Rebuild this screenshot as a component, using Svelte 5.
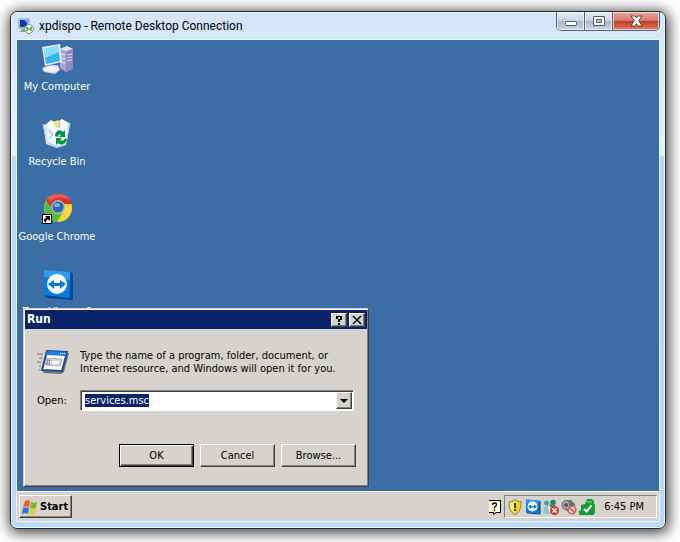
<script lang="ts">
	let command = $state("services.msc");
	let field: HTMLInputElement;

	const shortcuts = [
		{ id: "computer", label: "My Computer" },
		{ id: "bin", label: "Recycle Bin" },
		{ id: "chrome", label: "Google Chrome" },
		{ id: "viewer", label: "TeamViewer 6" },
	];

	$effect(() => {
		field.focus();
		field.select();
	});
</script>

{#snippet teamviewer()}
	<path d="M3 2 29 4v26L3 27z" fill="#087be0" />
	<path d="M3 2 29 4v8L3 9z" fill="#2b9cf2" />
	<path d="m29 4 3 2v26l-3-2zM3 27l3 3 26 2-3-2z" fill="#06459e" />
	<circle cx="16" cy="16" r="10" fill="#fff" />
	<path d="m7 16 6-4v3h6v-3l6 4-6 5v-3h-6v3z" fill="#087be0" />
{/snippet}

<main class="screen">
	<section class="window">
		<header class="caption">
			<svg class="caption-icon" viewBox="0 0 16 16" aria-hidden="true">
				<path d="M1 1h10v9H1z" fill="#dce3ea" stroke="#8796a8" />
				<path d="M2 2h8v7H2z" fill="#1238b5" />
				<path d="M6 2h4v5z" fill="#678df0" />
				<path d="M4 11h5v3H2z" fill="#8c9bab" />
				<circle cx="11" cy="11" r="4.5" fill="#f6fff0" stroke="#7a9c73" />
				<path d="m8 9 2 2-2 2m6-4-2 2 2 2" fill="none" stroke="#29962b" stroke-width="1.4" />
			</svg>
			<h1>xpdispo - Remote Desktop Connection</h1>
			<div class="controls">
				<button type="button" title="Minimize">
					<svg viewBox="0 0 28 18"><rect x="8.500" y="9.500" width="11" height="4" rx="1" fill="#fff" stroke="#535967" /></svg>
				</button>
				<button type="button" title="Restore">
					<svg viewBox="0 0 28 18"><path d="M8.500 4.500h11v9h-11zM11.500 7.500v3h5v-3z" fill="#fff" fill-rule="evenodd" stroke="#535967" /></svg>
				</button>
				<button type="button" title="Close" class="close">
					<svg viewBox="0 0 28 18"><path d="M9 4h4l1.500 2L16 4h4l-3.300 4.700L20 14h-4l-1.500-2.300L13 14H9l3.300-5.300z" fill="#fff" stroke="#5a4048" /></svg>
				</button>
			</div>
		</header>

		<div class="session">
			<div class="desktop">
				<ul class="shortcuts">
					{#each shortcuts as item (item.id)}
						<li>
							<svg viewBox="0 0 32 32" aria-hidden="true">
								{#if item.id === "computer"}
									<path d="m19 6 7-3 6 3v20l-7 3-6-4z" fill="#aaa3d5" />
									<path d="m25 8 7-2v20l-7 3z" fill="#8f88c2" />
									<path d="m19 6 7-3 6 3-7 2z" fill="#e5e2fa" />
									<path d="m20 11 4 1m-4 3 4 1m-4 3 4 1" stroke="#f3f0ff" />
									<path d="m26 12 5-1m-5 4 5-1m-5 4 5-1" stroke="#d8d4f0" />
									<path d="M10 22h7l2 5-5 4-11-2-2-4z" fill="#d1cee5" />
									<ellipse cx="10" cy="26" rx="8" ry="3" fill="#f0effa" />
									<path d="m1 4 18-3 2 18-17 4z" fill="#e9edfa" />
									<path d="m3 6 14-3 2 15-14 3z" fill="#35b6f4" />
									<path d="m3 6 14-3 1 6L4 15z" fill="#8adeff" />
								{:else if item.id === "bin"}
									<path d="m2 6 10 4 17-5-4 22-9 3-11-4z" fill="#cde5f5" />
									<path d="m4 7 6-5 5 3 6-4 7 4-5 9-9 3z" fill="#f9fbff" />
									<path d="m12 4 5-2 3 5-4 5z" fill="#eee77b" />
									<path d="m5 9 6 9 5-9 5 4 6-6-3 18-8 3-10-4z" fill="#e9f4fd" />
									<path d="m2 6 4 18 10 5 9-4 4-20" fill="none" stroke="#b5d5f0" />
									<path d="m8 12 4 4-4 5m10-11 1-6" stroke="#c0a7dd" fill="none" />
									<path d="M14 18c0-5 5-7 8-4l2-2v7h-6l2-2c-2-1-3 0-3 2zm12 3c-1 5-6 7-9 4l-2 2v-7h6l-2 2c2 1 4 1 4-1z" fill="#079437" />
								{:else if item.id === "chrome"}
									<circle cx="17" cy="15" r="14" fill="#f8d73b" />
									<path d="M5 8C12-3 28-1 31 11H17c-5 0-6 3-5 6z" fill="#dc3029" />
									<path d="M5 8c-5 10 1 20 11 21l6-10c-4 4-9 2-10-2z" fill="#58b949" />
									<path d="M7 5C14-1 25 0 29 7c-7-3-14-4-20 2z" fill="#f37c6e" opacity=".6" />
									<circle cx="17" cy="14" r="7" fill="#a9b4bd" />
									<circle cx="17" cy="14" r="5.500" fill="#276bb4" />
									<ellipse cx="16" cy="12" rx="3" ry="2" fill="#75b6ed" />
									<path d="M1.500 21.500h9v9h-9z" fill="#fff" stroke="#000" />
									<path d="M4 23h5v5l-2-1.500c-2 1-2 2-2.500 3.500C2 27 3 26 5.500 24.500z" />
								{:else}
									{@render teamviewer()}
								{/if}
							</svg>
							<span>{item.label}</span>
						</li>
					{/each}
				</ul>

				<form class="run" aria-label="Run" onsubmit={(e) => e.preventDefault()}>
					<div class="run-title">
						<h2>Run</h2>
						<button type="button" title="Help">
							<svg viewBox="0 0 12 10"><path d="M3 1h6v4H7v2H5V4h2V2H5v2H3zM5 8h2v2H5z" /></svg>
						</button>
						<button type="button" title="Close">
							<svg viewBox="0 0 12 10"><path d="m2 1 8 8m0-8L2 9" stroke="#000" stroke-width="1.600" /></svg>
						</button>
					</div>
					<div class="run-body">
						<svg class="run-icon" viewBox="0 0 32 26" aria-hidden="true">
							<path d="m12 4 20 0-5 19-3 2-18-1z" fill="#77736c" />
							<path d="m10 2 20 1-5 19-20-1z" fill="#fff" stroke="#1c4f96" stroke-width="2" />
							<path d="m10 2 20 1-1 4-20-1z" fill="#1680dc" />
							<path d="M23 4.500h1m1 0h1m1 0h1" stroke="#fff" />
							<path d="m10 9 15 1-2 7-15-1z" fill="#f4f4f4" stroke="#aaa9a5" />
							<path d="m11 11-1 4m3-4-1 4m-2-4h4m-5 4h4" stroke="#777" />
							<path d="M15 11h8l-1 5h-8z" fill="#fff" stroke="#bbb" />
							<path d="M0 5h6M2 9h3M0 13h4M2 17h2M2 21h1" stroke="#726f70" />
						</svg>
						<p>Type the name of a program, folder, document, or<br />Internet resource, and Windows will open it for you.</p>
						<label for="command">Open:</label>
						<div class="combo">
							<input id="command" type="text" spellcheck="false" autocomplete="off" bind:this={field} bind:value={command} />
							<button type="button" title="Show recent commands">
								<svg viewBox="0 0 12 14"><path d="M2 5h8L6 9z" /></svg>
							</button>
						</div>
					</div>
					<div class="actions">
						<button type="submit" class="default">OK</button>
						<button type="button">Cancel</button>
						<button type="button">Browse...</button>
					</div>
				</form>
			</div>

			<footer class="taskbar">
				<button type="button" class="start">
					<svg viewBox="0 0 16 16" aria-hidden="true">
						<path d="M3 2c2-1 4-1 5 0L7 8C5 7 3 7 1 8z" fill="#ed5a24" />
						<path d="M9 3c2 1 4 1 6 0l-1 6c-2 1-4 1-6 0z" fill="#78b72a" />
						<path d="M1 9c2-1 4-1 6 0l-1 6c-2-1-4-1-6 0z" fill="#3371d7" />
						<path d="M8 10c2 1 4 1 6 0l-1 5c-2 1-4 1-6 0z" fill="#f5c51e" />
					</svg>
					Start
				</button>
				<svg class="help" viewBox="0 0 12 16" aria-hidden="true">
					<path d="M.500 1.500h10v12h-4l-2 2v-2h-4z" fill="#ffffdc" stroke="#fff" />
					<path d="M11.500 1v12.500H7l-2.500 2v-2H0M0 1.500h11" fill="none" stroke="#000" />
					<path d="M3.500 6V5.500Q3.500 4 5.500 4t2 1.700Q7.500 7 5.500 8v1.500m0 1v1.500" fill="none" stroke="#000" stroke-width="1.300" />
				</svg>
				<div class="tray">
					<svg viewBox="0 0 16 16" aria-hidden="true">
						<path d="M8 .500c2 2 4 2 6 2 0 6-1 11-6 13-5-2-6-7-6-13 2 0 4 0 6-2z" fill="#f3cf28" stroke="#8f8042" />
						<path d="M8 2v12c-4-2-5-6-5-10 2 0 4-1 5-2z" fill="#fff080" />
						<path d="M8 4v5m0 1v2" stroke="#463b18" stroke-width="2" />
					</svg>
					<svg viewBox="1 1 32 32" aria-hidden="true">{@render teamviewer()}</svg>
					<svg viewBox="0 0 16 16" aria-hidden="true">
						<path d="M6 6c4-2 8 0 8 6l-7 2z" fill="#3f8a76" />
						<circle cx="10" cy="3.500" r="2.800" fill="#347b78" />
						<path d="M1 9c0-3 5-4 7 0l1 6H0z" fill="#8cc5c4" />
						<circle cx="3.500" cy="4" r="2.500" fill="#4c96ab" />
						<path d="m5 6 4 3-3 5z" fill="#d5f0e0" />
						<circle cx="11.500" cy="11.500" r="4.500" fill="#df3528" />
						<path d="m9.500 9.500 4 4m0-4-4 4" stroke="#fff" stroke-width="1.500" />
					</svg>
					<svg viewBox="0 0 16 16" aria-hidden="true">
						<path d="M4 1h6l4 4-1 8-4 1-6-4z" fill="#6e6e73" />
						<ellipse cx="5" cy="6" rx="4" ry="4.500" fill="#aaa" stroke="#66666c" />
						<circle cx="5" cy="6" r="2" fill="#55565a" />
						<circle cx="11" cy="11" r="3.800" fill="#f5dfd9" stroke="#cf6058" stroke-width="1.600" />
						<path d="m8.500 8.500 5 5" stroke="#cf6058" stroke-width="1.800" />
					</svg>
					<svg viewBox="0 0 16 16" aria-hidden="true">
						<path d="M8 0h5l2 2v3l1 1v8l-2 2H0v-4l2-1V6l4-1z" fill="#169c32" />
						<path d="M8 2h5v2H8z" fill="#4cc653" />
						<path d="m5 10 2.500 2.500 5-6" fill="none" stroke="#fff" stroke-width="2" />
					</svg>
					<time>6:45 PM</time>
				</div>
			</footer>
		</div>
	</section>
</main>

<style>
	:global(body) {
		margin: 0;
		background: #fff;
	}

	* {
		box-sizing: border-box;
	}

	.screen {
		display: flex;
		min-height: 100vh;
		padding: 11px 14px 13px 10px;
		font: 11px/13px "DejaVu Sans Condensed", "DejaVu Sans", sans-serif;
		overflow: hidden;
	}

	h1,
	h2,
	p,
	ul {
		margin: 0;
		padding: 0;
	}

	button {
		padding: 0;
		font: inherit;
		color: #000;
	}

	svg {
		display: block;
		flex: none;
	}

	.window {
		display: flex;
		flex: 1;
		flex-direction: column;
		padding: 0 5px 6px;
		border: 1px solid #202830;
		border-radius: 7px;
		background: linear-gradient(#d3e5fa, #e4f2fc 28%, #b7d6f3 28%, #badafa);
		box-shadow:
			inset 0 0 0 1px #f2faff,
			1px 2px 14px 2px rgba(0, 0, 0, 0.75);
	}

	.caption {
		display: flex;
		height: 27px;
		align-items: center;
		gap: 5px;
		padding-left: 2px;
	}

	.caption-icon {
		width: 16px;
		height: 16px;
	}

	h1 {
		flex: 1;
		font: 12px/16px Roboto, "Open Sans", sans-serif;
		white-space: nowrap;
	}

	.controls {
		display: flex;
		align-self: flex-start;
		border: 1px solid #596473;
		border-top: 0;
		border-radius: 0 0 5px 5px;
		overflow: hidden;
	}

	.controls button {
		width: 28px;
		height: 18px;
		border: 0;
		border-right: 1px solid #596473;
		background: linear-gradient(#e5edf6, #c8d4e2 48%, #a6b7cb 50%, #c4d8ec);
		box-shadow: inset 0 0 0 1px rgba(255, 255, 255, 0.6);
	}

	.controls svg {
		width: 28px;
		height: 18px;
		margin: 0 auto;
	}

	.controls .close {
		width: 46px;
		border: 0;
		background: linear-gradient(#e8a79d, #d57769 48%, #bd3925 50%, #d98065);
	}

	.session {
		display: flex;
		flex: 1;
		flex-direction: column;
		border: 1px solid #e8f5ff;
	}

	.desktop {
		position: relative;
		flex: 1;
		min-height: 450px;
		background: #3a6ea5;
	}

	.shortcuts {
		width: 80px;
		padding-top: 3px;
		list-style: none;
		color: #fff;
	}

	.shortcuts li {
		display: flex;
		height: 75px;
		flex-direction: column;
		align-items: center;
		gap: 5px;
		white-space: nowrap;
	}

	.shortcuts svg {
		width: 32px;
		height: 32px;
	}

	.run {
		position: absolute;
		top: 268px;
		left: 6px;
		width: 346px;
		padding: 1px 1px 19px;
		border: 1px solid;
		border-color: #d6d3ce #404040 #404040 #d6d3ce;
		background: #d6d3ce;
		box-shadow:
			inset 1px 1px #fff,
			inset -1px -1px #808080;
	}

	.run-title {
		display: flex;
		height: 19px;
		align-items: center;
		gap: 2px;
		padding: 0 2px;
		background: #0a246a;
	}

	h2 {
		flex: 1;
		font-size: 12px;
		line-height: 13px;
		color: #fff;
	}

	.run-title button,
	.combo button,
	.actions button,
	.start {
		border: 1px solid;
		border-color: #fff #404040 #404040 #fff;
		background: #d6d3ce;
		box-shadow: inset -1px -1px #808080;
	}

	.run-title button {
		width: 16px;
		height: 14px;
	}

	.run-title svg {
		width: 12px;
		height: 10px;
		margin: 0 auto;
	}

	.run-body {
		display: grid;
		grid-template-columns: 32px 1fr;
		align-items: center;
		gap: 15px 11px;
		padding: 20px 13px 0 12px;
	}

	.run-icon {
		width: 32px;
		height: 26px;
	}

	.run-body p {
		white-space: nowrap;
	}

	.combo {
		display: flex;
		height: 21px;
		border: 1px solid;
		border-color: #808080 #fff #fff #808080;
		background: #fff;
		box-shadow: inset 1px 1px #404040;
		padding: 1px;
	}

	.combo input {
		flex: 1;
		min-width: 0;
		padding: 0 3px;
		border: 0;
		outline: 0;
		background: none;
		font: inherit;
	}

	.combo input::selection {
		color: #fff;
		background: #0a246a;
	}

	.combo button {
		width: 16px;
	}

	.combo svg {
		width: 12px;
		height: 14px;
		margin: 0 auto;
	}

	.actions {
		display: flex;
		justify-content: flex-end;
		gap: 6px;
		padding: 33px 11px 0;
	}

	.actions button {
		width: 75px;
		height: 23px;
	}

	.actions .default {
		border-color: #000;
		box-shadow:
			inset 1px 1px #fff,
			inset -1px -1px #404040,
			inset -2px -2px #808080;
	}

	.taskbar {
		display: flex;
		height: 30px;
		align-items: center;
		padding: 0 2px;
		border-top: 1px solid #fff;
		background: #d6d3ce;
	}

	.start {
		display: flex;
		height: 23px;
		align-items: center;
		gap: 2px;
		padding: 0 3px 0 2px;
		font-weight: bold;
	}

	.start svg {
		width: 16px;
		height: 16px;
	}

	.help {
		width: 12px;
		height: 16px;
		margin: 0 3px 0 auto;
	}

	.tray {
		display: flex;
		height: 23px;
		align-items: center;
		gap: 2px;
		padding: 0 12px 0 2px;
		border: 1px solid;
		border-color: #808080 #fff #fff #808080;
	}

	.tray svg {
		width: 16px;
		height: 16px;
	}

	time {
		margin-left: 7px;
	}
</style>
